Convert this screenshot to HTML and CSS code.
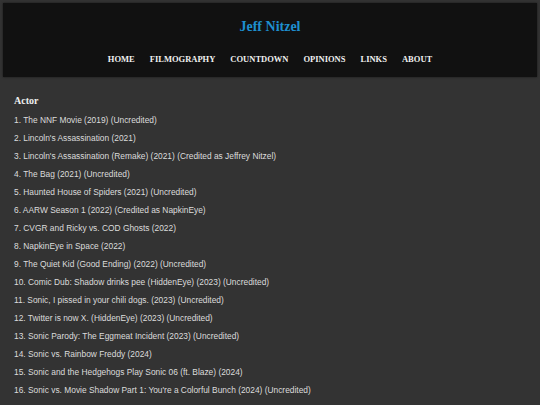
FILE: index.html
```html
<!DOCTYPE html>
<html>
<head>
<meta charset="utf-8">
<link rel="stylesheet" href="styles.css">
</head>
<body>
<header class="site-header">
  <h1 class="site-title">Jeff Nitzel</h1>
  <nav class="site-nav">
    <a href="#">HOME</a>
    <a href="#">FILMOGRAPHY</a>
    <a href="#">COUNTDOWN</a>
    <a href="#">OPINIONS</a>
    <a href="#">LINKS</a>
    <a href="#">ABOUT</a>
  </nav>
</header>
<main class="content">
  <h2 class="section-title">Actor</h2>
  <ul class="film-list">
    <li>1. The NNF Movie (2019) (Uncredited)</li>
    <li>2. Lincoln's Assassination (2021)</li>
    <li>3. Lincoln's Assassination (Remake) (2021) (Credited as Jeffrey Nitzel)</li>
    <li>4. The Bag (2021) (Uncredited)</li>
    <li>5. Haunted House of Spiders (2021) (Uncredited)</li>
    <li>6. AARW Season 1 (2022) (Credited as NapkinEye)</li>
    <li>7. CVGR and Ricky vs. COD Ghosts (2022)</li>
    <li>8. NapkinEye in Space (2022)</li>
    <li>9. The Quiet Kid (Good Ending) (2022) (Uncredited)</li>
    <li>10. Comic Dub: Shadow drinks pee (HiddenEye) (2023) (Uncredited)</li>
    <li>11. Sonic, I pissed in your chili dogs. (2023) (Uncredited)</li>
    <li>12. Twitter is now X. (HiddenEye) (2023) (Uncredited)</li>
    <li>13. Sonic Parody: The Eggmeat Incident (2023) (Uncredited)</li>
    <li>14. Sonic vs. Rainbow Freddy (2024)</li>
    <li>15. Sonic and the Hedgehogs Play Sonic 06 (ft. Blaze) (2024)</li>
    <li>16. Sonic vs. Movie Shadow Part 1: You're a Colorful Bunch (2024) (Uncredited)</li>
  </ul>
</main>
</body>
</html>
```
FILE: styles.css
```css
html, body {
  margin: 0;
  padding: 0;
  background: #333333;
}
body {
  padding: 3px;
  font-family: "Liberation Serif", "Times New Roman", serif;
  color: #e0e0e0;
  overflow: hidden;
}
.site-header {
  background: #111111;
  height: 74px;
  box-sizing: border-box;
  padding-top: 16px;
  text-align: center;
  box-shadow: 0 0 2px rgba(0,0,0,0.6);
}
.site-title {
  margin: 0;
  font-size: 14px;
  line-height: 16px;
  font-weight: bold;
  color: #1e8fcf;
}
.site-nav {
  display: flex;
  justify-content: center;
  gap: 15px;
  margin-top: 18px;
}
.site-nav a {
  color: #f0f0f0;
  text-decoration: none;
  font-weight: bold;
  font-size: 8.5px;
  line-height: 12px;
}
.content {
  padding: 0 11px;
}
.section-title {
  margin: 18px 0 0 0;
  font-size: 10px;
  line-height: 12px;
  font-weight: bold;
  color: #f0f0f0;
}
.film-list {
  list-style: none;
  margin: 0;
  padding: 0;
  margin-top: 4px;
  font-family: "Liberation Sans", Arial, sans-serif;
  font-size: 8.4px;
  color: #dcdcdc;
}
.film-list li {
  line-height: 18px;
}
```
